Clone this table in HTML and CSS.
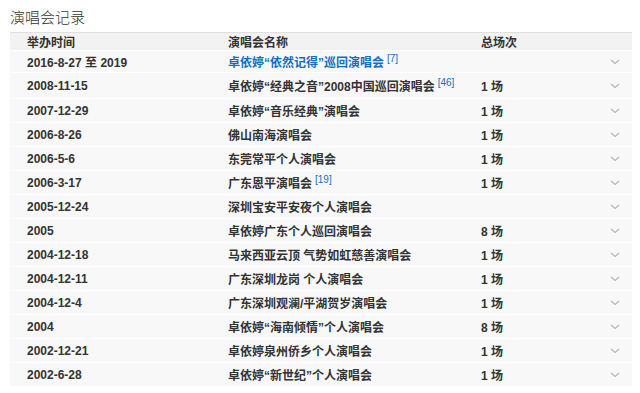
FILE: index.html
```html
<!DOCTYPE html>
<html lang="zh">
<head>
<meta charset="utf-8">
<link rel="stylesheet" href="styles.css">
</head>
<body>
<div class="page">
  <h2 class="title">演唱会记录</h2>
  <div class="table">
    <div class="row head">
      <div class="c1">举办时间</div><div class="c2">演唱会名称</div><div class="c3">总场次</div><div class="c4"></div>
    </div>
    <div class="row first">
      <div class="c1">2016-8-27 至 2019</div><div class="c2"><span class="link">卓依婷“依然记得”巡回演唱会</span><sup>[7]</sup></div><div class="c3"></div><div class="c4"><svg class="chev" viewBox="0 0 10 6"><path d="M1 1 L5 4.5 L9 1" /></svg></div>
    </div>
    <div class="row second">
      <div class="c1">2008-11-15</div><div class="c2">卓依婷“经典之音”2008中国巡回演唱会<sup>[46]</sup></div><div class="c3">1 场</div><div class="c4"><svg class="chev" viewBox="0 0 10 6"><path d="M1 1 L5 4.5 L9 1" /></svg></div>
    </div>
    <div class="row">
      <div class="c1">2007-12-29</div><div class="c2">卓依婷“音乐经典”演唱会</div><div class="c3">1 场</div><div class="c4"><svg class="chev" viewBox="0 0 10 6"><path d="M1 1 L5 4.5 L9 1" /></svg></div>
    </div>
    <div class="row">
      <div class="c1">2006-8-26</div><div class="c2">佛山南海演唱会</div><div class="c3">1 场</div><div class="c4"><svg class="chev" viewBox="0 0 10 6"><path d="M1 1 L5 4.5 L9 1" /></svg></div>
    </div>
    <div class="row">
      <div class="c1">2006-5-6</div><div class="c2">东莞常平个人演唱会</div><div class="c3">1 场</div><div class="c4"><svg class="chev" viewBox="0 0 10 6"><path d="M1 1 L5 4.5 L9 1" /></svg></div>
    </div>
    <div class="row">
      <div class="c1">2006-3-17</div><div class="c2">广东恩平演唱会<sup>[19]</sup></div><div class="c3">1 场</div><div class="c4"><svg class="chev" viewBox="0 0 10 6"><path d="M1 1 L5 4.5 L9 1" /></svg></div>
    </div>
    <div class="row">
      <div class="c1">2005-12-24</div><div class="c2">深圳宝安平安夜个人演唱会</div><div class="c3"></div><div class="c4"><svg class="chev" viewBox="0 0 10 6"><path d="M1 1 L5 4.5 L9 1" /></svg></div>
    </div>
    <div class="row">
      <div class="c1">2005</div><div class="c2">卓依婷广东个人巡回演唱会</div><div class="c3">8 场</div><div class="c4"><svg class="chev" viewBox="0 0 10 6"><path d="M1 1 L5 4.5 L9 1" /></svg></div>
    </div>
    <div class="row">
      <div class="c1">2004-12-18</div><div class="c2">马来西亚云顶 气势如虹慈善演唱会</div><div class="c3">1 场</div><div class="c4"><svg class="chev" viewBox="0 0 10 6"><path d="M1 1 L5 4.5 L9 1" /></svg></div>
    </div>
    <div class="row">
      <div class="c1">2004-12-11</div><div class="c2">广东深圳龙岗 个人演唱会</div><div class="c3">1 场</div><div class="c4"><svg class="chev" viewBox="0 0 10 6"><path d="M1 1 L5 4.5 L9 1" /></svg></div>
    </div>
    <div class="row">
      <div class="c1">2004-12-4</div><div class="c2">广东深圳观澜/平湖贺岁演唱会</div><div class="c3">1 场</div><div class="c4"><svg class="chev" viewBox="0 0 10 6"><path d="M1 1 L5 4.5 L9 1" /></svg></div>
    </div>
    <div class="row">
      <div class="c1">2004</div><div class="c2">卓依婷“海南倾情”个人演唱会</div><div class="c3">8 场</div><div class="c4"><svg class="chev" viewBox="0 0 10 6"><path d="M1 1 L5 4.5 L9 1" /></svg></div>
    </div>
    <div class="row">
      <div class="c1">2002-12-21</div><div class="c2">卓依婷泉州侨乡个人演唱会</div><div class="c3">1 场</div><div class="c4"><svg class="chev" viewBox="0 0 10 6"><path d="M1 1 L5 4.5 L9 1" /></svg></div>
    </div>
    <div class="row">
      <div class="c1">2002-6-28</div><div class="c2">卓依婷“新世纪”个人演唱会</div><div class="c3">1 场</div><div class="c4"><svg class="chev" viewBox="0 0 10 6"><path d="M1 1 L5 4.5 L9 1" /></svg></div>
    </div>
  </div>
</div>
</body>
</html>
```
FILE: styles.css
```css
html, body {
  margin: 0;
  padding: 0;
  background: #ffffff;
}
.page {
  padding: 6px 8px 0 10px;
  font-family: "Liberation Sans", "Noto Sans CJK SC", sans-serif;
  color: #333333;
}
.title {
  margin: 0;
  font-size: 15px;
  font-weight: 300;
  line-height: 22px;
  color: #333333;
  font-family: "Noto Sans CJK SC", sans-serif;
}
.table {
  margin-top: 4px;
  border-top: 1px solid #e0e0e0;
  width: 622px;
}
.row {
  display: grid;
  grid-template-columns: 218px 253px 124px 27px;
  height: 23px;
  align-items: center;
  background: #f8f8f8;
  border-bottom: 1px solid #ffffff;
  font-size: 12px;
  font-weight: bold;
}
.row.head {
  height: 17px;
  background: #f2f2f2;
  border-bottom: 1px solid #ffffff;
}
.row.first {
  height: 21px;
}
.row.second {
  height: 25px;
}
.c1 {
  padding-left: 17px;
}
.c2, .c3 {
  white-space: nowrap;
}
.link {
  color: #136ec2;
}
sup {
  font-size: 10px;
  font-weight: normal;
  color: #136ec2;
  vertical-align: 5px;
  line-height: 0;
  margin-left: 3px;
}
.c4 {
  display: flex;
  align-items: center;
  padding-left: 5px;
}
.chev {
  width: 10px;
  height: 6px;
  fill: none;
  stroke: #b4b4b4;
  stroke-width: 1.1;
}
```
